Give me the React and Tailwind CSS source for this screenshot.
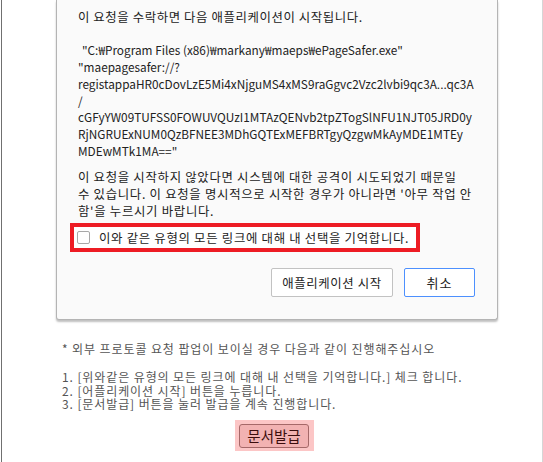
export default function App() {
  const font = { fontFamily: '"Noto Sans CJK KR", "Noto Sans", sans-serif' };

  return (
    <div className="w-[543px] h-[462px] bg-white pl-px overflow-hidden" style={font}>
      <div className="w-[542px] h-[462px] border-l border-r border-[#707070] border-r-[#d6d6d6]">
        {/* external protocol dialog (top is cut off) */}
        <div className="ml-[54px] w-[442px] border border-t-0 border-[#b4b4b4] bg-[#fafafa] rounded-b-[3px] shadow-[0_2px_2px_rgba(0,0,0,0.25)] pt-[9px] pl-[21px] pr-[22px] pb-[22px]">
          <div className="text-[12.4px] leading-[16.7px] text-[#222] whitespace-nowrap">
            <p className="tracking-[0.6px]">이 요청을 수락하면 다음 애플리케이션이 시작됩니다.</p>
            <p>&nbsp;</p>
            <div className="text-[11.8px]">
              <p className="pl-[4px]">"C:₩Program Files (x86)₩markany₩maeps₩ePageSafer.exe"</p>
              <p>"maepagesafer://?</p>
              <p>registappaHR0cDovLzE5Mi4xNjguMS4xMS9raGgvc2Vzc2lvbi9qc3A...qc3A</p>
              <p>/</p>
              <p>cGFyYW09TUFSS0FOWUVQUzI1MTAzQENvb2tpZTogSlNFU1NJT05JRD0y</p>
              <p>RjNGRUExNUM0QzBFNEE3MDhGQTExMEFBRTgyQzgwMkAyMDE1MTEy</p>
              <p>MDEwMTk1MA=="</p>
            </div>
          </div>

          <div className="mt-[10px] text-[12.4px] leading-[16.7px] tracking-[0.7px] text-[#222] whitespace-nowrap">
            <p>이 요청을 시작하지 않았다면 시스템에 대한 공격이 시도되었기 때문일</p>
            <p>수 있습니다. 이 요청을 명시적으로 시작한 경우가 아니라면 '아무 작업 안</p>
            <p>함'을 누르시기 바랍니다.</p>
          </div>

          {/* remember choice, marked in red */}
          <div className="mt-[4px] -ml-[8px] w-[350px] h-[29px] border-4 border-[#ed1c24] bg-white flex items-center pl-[3px]">
            <span className="w-[13px] h-[13px] border border-[#a8a8a8] rounded-[2px] bg-white shrink-0"></span>
            <span className="ml-[9px] text-[12.4px] tracking-[0.7px] text-[#222] whitespace-nowrap">
              이와 같은 유형의 모든 링크에 대해 내 선택을 기억합니다.
            </span>
          </div>

          <div className="mt-[16px] flex justify-end gap-[11px]">
            <button className="w-[122px] h-[29px] border border-[#c2c2c2] rounded-[2px] bg-white text-[12.4px] tracking-[0.6px] text-[#222]">
              애플리케이션 시작
            </button>
            <button className="w-[71px] h-[29px] border border-[#4d90fe] rounded-[2px] bg-white text-[13px] tracking-[1px] text-[#222]">
              취소
            </button>
          </div>
        </div>

        {/* guide text */}
        <div className="mt-[22px] pl-[60px] text-[12px] leading-[13.7px] tracking-[0.9px] text-[#555] whitespace-nowrap">
          <p>* 외부 프로토콜 요청 팝업이 보이실 경우 다음과 같이 진행해주십시오</p>
          <p>&nbsp;</p>
          <p>1. [위와같은 유형의 모든 링크에 대해 내 선택을 기억합니다.] 체크 합니다.</p>
          <p>2. [어플리케이션 시작] 버튼을 누릅니다.</p>
          <p>3. [문서발급] 버튼을 눌러 발급을 계속 진행합니다.</p>
        </div>

        <div className="mt-[9px] flex justify-center">
          <div className="bg-[#fcc6c6] pt-[3px] pb-[3px] pl-[4px] pr-[5px] ml-[5px]">
            <button className="w-[70px] h-[24px] border border-[#a56868] rounded-[3px] bg-[#f2b2b2] text-[14.5px] leading-none text-[#3c0d0d]">
              문서발급
            </button>
          </div>
        </div>
      </div>
    </div>
  );
}
